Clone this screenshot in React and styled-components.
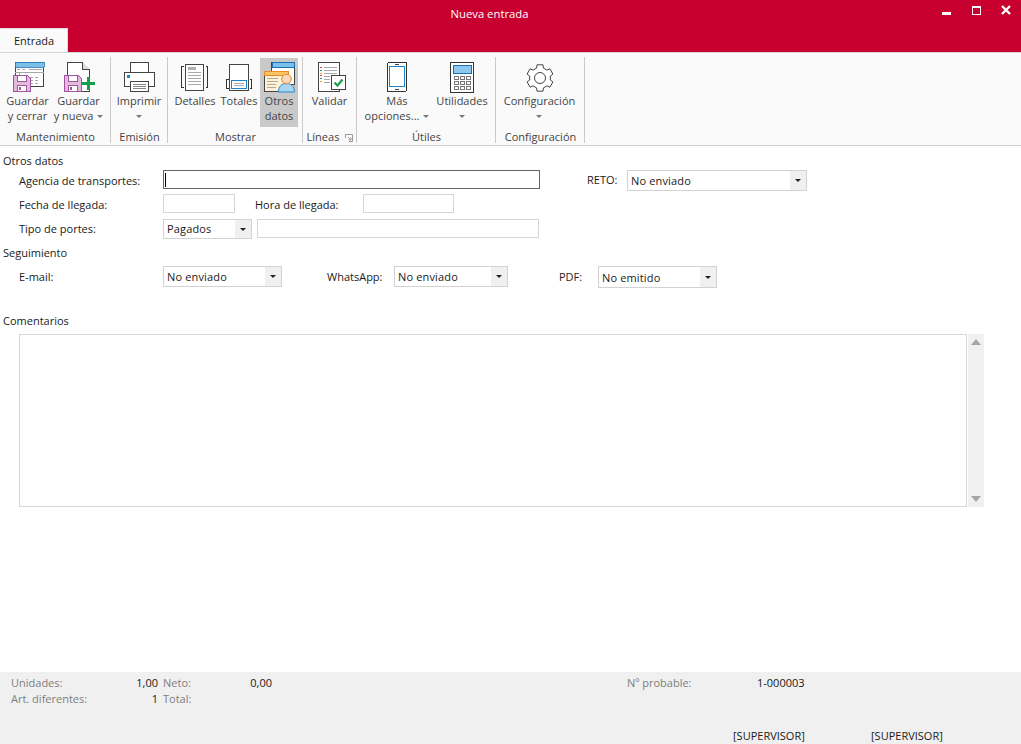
import React from "react";
import styled, { createGlobalStyle } from "styled-components";

const Global = createGlobalStyle`
  html, body { margin: 0; padding: 0; background: #fff; }
  body { font-family: "Open Sans", "Noto Sans", sans-serif; font-size: 11px; color: #1a1a1a; }
`;

const Page = styled.div`
  width: 1021px; height: 744px; display: flex; flex-direction: column; overflow: hidden; background: #fff;
`;
const TitleBar = styled.header`
  height: 28px; background: #c8002f; display: flex; align-items: center; position: relative; flex: none;
`;
const Title = styled.div`
  width: 979px; text-align: center; color: #fff; font-size: 11.3px; line-height: 28px;
`;
const WinControls = styled.div`
  position: absolute; top: 0; left: 0; width: 1021px; height: 28px; pointer-events: none;
`;
const WinIcon = styled.svg`
  position: absolute; left: ${p => p.$x}px; top: ${p => p.$y}px; shape-rendering: ${p => (p.$smooth ? "auto" : "crispEdges")};
`;
const TabRow = styled.div`
  height: 24px; background: #c8002f; flex: none; display: flex; align-items: flex-end;
`;
const Tab = styled.div`
  width: 68px; height: 24px; box-sizing: border-box; background: #fafafa; border: 1px solid #dcdcdc; border-bottom: 0; border-left-color: #fafafa;
  text-align: center; line-height: 23px; font-size: 11px; color: #1a1a1a;
`;
const Ribbon = styled.nav`
  flex: none; display: flex; background: #fafafa; padding-left: 1px;
  border-top: 1px solid #d6d6d6; border-bottom: 1px solid #d0d0d0; height: 92px;
`;
const Group = styled.section`
  width: ${p => p.$w}px; box-sizing: border-box; position: relative; display: flex; flex-direction: column;
  margin-top: 4px; height: 86px;
  border-right: 1px solid #c9c9c9;
  margin-right: 1px;
`;
const Buttons = styled.div`
  display: flex; height: 70px; padding-left: ${p => p.$pad || 0}px;
`;
const RButton = styled.div`
  width: ${p => p.$w}px; height: 69px; flex: none; display: flex; flex-direction: column; align-items: center;
  background: ${p => (p.$active ? "#c9c9c9" : "transparent")};
  margin-top: 1px;
`;
const IconBox = styled.svg`
  width: 36px; height: 36px; flex: none; display: block;
`;
const BtnLabel = styled.div`
  text-align: center; line-height: 15px; color: #444; font-size: 11px; white-space: nowrap; margin-top: -1px;
`;
const Chevron = styled.span`
  display: inline-block; width: 0; height: 0; border-left: 3px solid transparent; border-right: 3px solid transparent;
  border-top: 3px solid #777; vertical-align: middle; margin-left: ${p => p.$ml ?? 4}px; margin-top: -1px;
`;
const GroupLabel = styled.div`
  text-align: center; line-height: 16px; color: #444; font-size: 11px; margin-top: 2px; position: relative;
`;
const LauncherText = styled.span`
  margin-right: 14px;
`;
const Launcher = styled.svg`
  position: absolute; right: 3px; top: 5px;
`;
const Body = styled.main`
  flex: 1; display: flex; flex-direction: column; position: relative;
`;
const Section = styled.div`
  margin: ${p => p.$top}px 0 0 3px; line-height: 16px; font-size: 11px; color: #1a1a1a;
`;
const Row = styled.div`
  display: flex; align-items: flex-start; padding-left: 19px; margin-top: ${p => p.$top || 0}px; height: ${p => p.$h}px;
`;
const Label = styled.label`
  width: ${p => p.$w}px; flex: none; font-size: 11px; line-height: 16px; color: #1a1a1a; margin-top: ${p => p.$mt ?? 3}px; margin-left: ${p => p.$ml || 0}px;
`;
const Input = styled.div`
  width: ${p => p.$w}px; height: 19px; box-sizing: border-box; flex: none; background: #fff;
  border: 1px solid ${p => (p.$focus ? "#646464" : "#d6d6d6")}; margin-left: ${p => p.$ml || 0}px; display: flex; align-items: center; padding-left: 1px;
`;
const Caret = styled.span`
  width: 1px; height: 14px; background: #000; display: block;
`;
const Select = styled.div`
  width: ${p => p.$w}px; height: ${p => p.$h || 21}px; box-sizing: border-box; flex: none; background: #fff; border: 1px solid #d2d2d2;
  display: flex; align-items: stretch; font-size: 11px; color: #1a1a1a; margin-left: ${p => p.$ml || 0}px;
  line-height: ${p => (p.$h || 21) - 2}px;
`;
const SelectText = styled.span`
  flex: 1; padding-left: 3px; padding-top: ${p => p.$dy || 0}px; letter-spacing: .15px;
`;
const SelectBtn = styled.span`
  width: 16px; background: #f0f0f0; display: flex; align-items: center; justify-content: center;
  &::after { content: ""; width: 0; height: 0; border-left: 3px solid transparent; border-right: 3px solid transparent; border-top: 3px solid #222; }
`;
const CommentRow = styled.div`
  display: flex; margin: 5px 0 0 19px; height: 173px;
`;
const Comment = styled.div`
  width: 948px; box-sizing: border-box; border: 1px solid #d6d6d6; background: #fff; flex: none;
`;
const Scroll = styled.div`
  width: 16px; margin-left: 1px; background: #f0f0f0; display: flex; flex-direction: column; justify-content: space-between; align-items: center; padding: 5px 0; box-sizing: border-box;
`;
const ScrollArrow = styled.span`
  width: 0; height: 0; border-left: 5px solid transparent; border-right: 5px solid transparent;
  ${p => (p.$down ? "border-top: 6px solid #a6a6a6;" : "border-bottom: 6px solid #a6a6a6;")}
`;
const Footer = styled.footer`
  height: 72px; flex: none; background: #f0f0f0; display: flex; flex-direction: column; padding: 3px 0 0 11px; box-sizing: border-box; font-size: 11px;
`;
const FootRow = styled.div`
  display: flex; line-height: 16px; white-space: nowrap; margin-top: ${p => (p.$auto ? "auto" : "0")};
`;
const FootCell = styled.div`
  width: ${p => p.$w}px; margin-left: ${p => p.$ml || 0}px; display: flex; flex: none;
`;
const FootLabel = styled.span`
  color: #7d7d7d; flex: ${p => (p.$w ? "none" : 1)}; width: ${p => (p.$w ? p.$w + "px" : "auto")};
`;
const FootValue = styled.span`
  color: #1a1a1a;
`;

const L = "#444";
const B = "#1b87c9";
const Floppy = ({ x, y }) => (
  <g transform={`translate(${x} ${y})`}>
    <path d="M.5.5H14.5L17 3V16.5H.5Z" fill="#e3bad9" stroke="#a253a0" />
    <path d="M4.5.5H13.5V6.5H4.5Z" fill="#fff" stroke="#a253a0" />
    <path d="M4.5 10.5H13.5V16.5H4.5Z" fill="#fff" stroke="#a253a0" />
    <path d="M6 12h2v3H6z" fill="#a253a0" />
  </g>
);
const Icon = ({ children }) => <IconBox viewBox="0 0 36 36" shapeRendering="crispEdges">{children}</IconBox>;

const IconSaveClose = () => (
  <Icon>
    <path d="M5.5 4.5H33.5V28.5H5.5Z" fill="#fff" stroke={L} />
    <path d="M5 4H34V9H5Z" fill="#7cc0ea" stroke="#1b6fb5" strokeWidth=".8" />
    <path d="M7 11h3v1H7zM12 11h3v1h-3zM19 11h13v1H19zM5 14h29v1H5zM9 15h1v12H9zM20 19h3v1h-3zM25 19h3v1h-3zM20 22h3v1h-3zM25 22h3v1h-3zM20 25h3v1h-3zM25 25h3v1h-3z" fill="#a6a6a6" />
    <Floppy x={3} y={17} />
  </Icon>
);
const IconSaveNew = () => (
  <Icon>
    <path d="M6.5 4.5H21.5L28.5 11.5V33.5H6.5Z" fill="#fff" stroke={L} />
    <path d="M21.5 4.5V11.5H28.5" fill="#ddd" stroke={L} />
    <Floppy x={3} y={17} />
    <path d="M26 19h3v5h5v3h-5v5h-3v-5h-5v-3h5z" fill="#13a04e" />
  </Icon>
);
const IconPrint = () => (
  <Icon>
    <path d="M9.5 4.5H27.5V16H9.5Z" fill="#fff" stroke={L} />
    <path d="M3.5 14.5H33.5V28.5H3.5Z" fill="#fff" stroke={L} />
    <path d="M6 17h3v3H6z" fill={B} />
    <path d="M9.5 23.5H27.5V33.5H9.5Z" fill="#fff" stroke={L} />
    <path d="M12 26h13v1H12zM12 28h13v1H12zM12 30h13v1H12z" fill="#888" />
  </Icon>
);
const IconDetails = () => (
  <Icon>
    <path d="M8.5 6.5H26.5V32.5H8.5Z" fill="#fff" stroke={L} />
    <path d="M11 9h8v3h-8z" fill="#b0b0b0" />
    <path d="M11 14h13v1H11zM11 17h13v1H11zM11 20h13v1H11zM11 23h13v1H11zM11 26h13v1H11z" fill="#aaa" />
    <path d="M6.5 8.5H4.5V29.5H6.5M28.5 8.5H30.5V29.5H28.5" fill="none" stroke="#333" />
  </Icon>
);
const IconTotals = () => (
  <Icon>
    <path d="M8.5 6.5H27.5V32.5H8.5Z" fill="#fff" stroke={L} />
    <path d="M7.5 21.5H5.5V30.5H7.5M28.5 21.5H30.5V30.5H28.5" fill="none" stroke="#333" />
    <path d="M10.5 22.5H25.5V30.5H10.5Z" fill="#fff" stroke={B} />
    <path d="M13 25h10v1H13zM13 27h10v1H13z" fill="#aaa" />
  </Icon>
);
const IconOther = () => (
  <Icon>
    <path d="M10.5 4.5H33.5V26H10.5Z" fill="#fff" stroke={L} />
    <path d="M11 4H33V9H11Z" fill="#7cc0ea" stroke="#1b6fb5" />
    <path d="M3.5 13.5H26.5V33.5H3.5Z" fill="#fdf1d8" stroke={L} />
    <path d="M3 13H27V17H3Z" fill="#fbc465" stroke="#ee8a25" />
    <path d="M6 20h11v1H6zM6 23h11v1H6zM6 26h9v1H6zM6 29h9v1H6z" fill="#b5ab90" />
    <g shapeRendering="geometricPrecision">
      <path d="M17.5 34C17.5 28 21 25.5 25.5 25.5S33.5 28 33.5 34Z" fill="#a9d6f2" stroke="#2c8ac8" />
      <circle cx="25.5" cy="21" r="4.8" fill="#fbd9b8" stroke="#e4852f" />
    </g>
  </Icon>
);
const IconValidate = () => (
  <Icon>
    <path d="M6.5 4.5H27.5V33.5H6.5Z" fill="#fff" stroke={L} />
    <path d="M8 9h2v1H8zM8 17h2v1H8z" fill="#d83b3b" />
    <path d="M8 12h2v1H8zM8 20h2v1H8z" fill="#1aa14f" />
    <path d="M8 15h2v1H8zM8 23h2v1H8z" fill="#e6a326" />
    <path d="M12 9h13v1H12zM12 12h13v1H12zM12 15h13v1H12zM12 18h6v1h-6zM12 21h6v1h-6zM12 24h6v1h-6z" fill="#aaa" />
    <path d="M19.5 17.5H33.5V31.5H19.5Z" fill="#fff" stroke={L} />
    <path d="M22.5 24.5l3 3 5-6" fill="none" stroke="#1aa14f" strokeWidth="2.2" shapeRendering="geometricPrecision" />
  </Icon>
);
const IconPhone = () => (
  <Icon>
    <rect x="8.5" y="4.5" width="19" height="29" rx="1.5" fill="#fff" stroke="#333" />
    <path d="M10.5 8.5H25.5V28.5H10.5Z" fill="#fff" stroke={B} />
    <path d="M16 6h4v1h-4zM16 31h4v1h-4z" fill="#444" />
  </Icon>
);
const IconCalc = () => (
  <Icon>
    <path d="M6.5 4.5H29.5V34.5H6.5Z" fill="#fff" stroke="#333" />
    <path d="M9.5 7.5H27.5V15.5H9.5Z" fill="#8cc8ee" stroke="#1b6fb5" />
    {[18, 23, 28].map(y => [10, 16, 22].map(x => (
      <path key={`${x}-${y}`} d={`M${x}.5 ${y}.5h4v3h-4z`} fill="#fff" stroke="#777" />
    )))}
  </Icon>
);
const gearPath = (() => {
  const cx = 18, cy = 20, pts = [];
  for (let i = 0; i < 6; i++) {
    const a = (i * 60 - 90) * Math.PI / 180;
    const p = (r, d) => { const t = a + d * Math.PI / 180; return `${(cx + r * Math.cos(t)).toFixed(1)} ${(cy + r * Math.sin(t)).toFixed(1)}`; };
    pts.push(`${i ? "L" : "M"}${p(13.5, -13)} L${p(13.5, 13)} L${p(10.5, 19)} L${p(10.5, 41)}`);
  }
  return pts.join(" ") + " Z";
})();
const IconGear = () => (
  <IconBox viewBox="0 0 36 36">
    <path d={gearPath} fill="#fff" stroke={L} strokeLinejoin="round" />
    <circle cx="18" cy="20" r="5.5" fill="#fff" stroke={L} />
  </IconBox>
);

const RBtn = ({ w, icon, active, children }) => (
  <RButton $w={w} $active={active}>{icon}<BtnLabel>{children}</BtnLabel></RButton>
);

export default function App() {
  return (
    <Page>
      <Global />
      <TitleBar>
        <Title>Nueva entrada</Title>
        <WinControls>
          <WinIcon $x={942} $y={12} width="9" height="3"><path d="M0 0h9v3H0z" fill="#fff" /></WinIcon>
          <WinIcon $x={972} $y={6} width="9" height="9"><path d="M.5 .5h8v8h-8z" fill="none" stroke="#fff" /><path d="M0 0h9v2H0z" fill="#fff" /></WinIcon>
          <WinIcon $x={1001} $y={5} $smooth width="10" height="10"><path d="M1 1l8 8M9 1l-8 8" stroke="#fff" strokeWidth="2.4" /></WinIcon>
        </WinControls>
      </TitleBar>
      <TabRow><Tab>Entrada</Tab></TabRow>
      <Ribbon>
        <Group $w={110}>
          <Buttons $pad={1}>
            <RBtn w={51} icon={<IconSaveClose />}>Guardar<br />y cerrar</RBtn>
            <RBtn w={51} icon={<IconSaveNew />}>Guardar<br />y nueva<Chevron /></RBtn>
          </Buttons>
          <GroupLabel>Mantenimiento</GroupLabel>
        </Group>
        <Group $w={56}>
          <Buttons>
            <RBtn w={54} icon={<IconPrint />}>Imprimir<br /><Chevron $ml={0} /></RBtn>
          </Buttons>
          <GroupLabel>Emisión</GroupLabel>
        </Group>
        <Group $w={134}>
          <Buttons $pad={3}>
            <RBtn w={46} icon={<IconDetails />}>Detalles</RBtn>
            <RBtn w={42} icon={<IconTotals />}>Totales</RBtn>
            <RBtn w={38} active icon={<IconOther />}>Otros<br />datos</RBtn>
          </Buttons>
          <GroupLabel>Mostrar</GroupLabel>
        </Group>
        <Group $w={53}>
          <Buttons>
            <RBtn w={51} icon={<IconValidate />}>Validar</RBtn>
          </Buttons>
          <GroupLabel>
            <LauncherText>Líneas</LauncherText>
            <Launcher width="8" height="8" viewBox="0 0 8 8"><path d="M.5 4V.5H7.5V7.5H4M3 3l3 3M6 3.5V6H3.5" fill="none" stroke="#999" /></Launcher>
          </GroupLabel>
        </Group>
        <Group $w={138}>
          <Buttons $pad={4}>
            <RBtn w={70} icon={<IconPhone />}>Más<br />opciones...<Chevron /></RBtn>
            <RBtn w={60} icon={<IconCalc />}>Utilidades<br /><Chevron $ml={0} /></RBtn>
          </Buttons>
          <GroupLabel>Útiles</GroupLabel>
        </Group>
        <Group $w={88}>
          <Buttons>
            <RBtn w={85} icon={<IconGear />}>Configuración<br /><Chevron $ml={0} /></RBtn>
          </Buttons>
          <GroupLabel>Configuración</GroupLabel>
        </Group>
      </Ribbon>
      <Body>
        <Section $top={7}>Otros datos</Section>
        <Row $top={1} $h={24}>
          <Label $w={144}>Agencia de transportes:</Label>
          <Input $w={377} $focus><Caret /></Input>
          <Label $w={40} $ml={47} $mt={2}>RETO:</Label>
          <Select $w={180}><SelectText>No enviado</SelectText><SelectBtn /></Select>
        </Row>
        <Row $h={25}>
          <Label $w={144}>Fecha de llegada:</Label>
          <Input $w={72} />
          <Label $w={108} $ml={20}>Hora de llegada:</Label>
          <Input $w={91} />
        </Row>
        <Row $h={26}>
          <Label $w={144} $mt={2}>Tipo de portes:</Label>
          <Select $w={89} $h={20}><SelectText>Pagados</SelectText><SelectBtn /></Select>
          <Input $w={282} $ml={5} />
        </Row>
        <Section $top={0}>Seguimiento</Section>
        <Row $top={5} $h={44}>
          <Label $w={144}>E-mail:</Label>
          <Select $w={119}><SelectText>No enviado</SelectText><SelectBtn /></Select>
          <Label $w={67} $ml={45}>WhatsApp:</Label>
          <Select $w={114}><SelectText>No enviado</SelectText><SelectBtn /></Select>
          <Label $w={39} $ml={51}>PDF:</Label>
          <Select $w={119} $h={22}><SelectText $dy={1}>No emitido</SelectText><SelectBtn /></Select>
        </Row>
        <Section $top={3}>Comentarios</Section>
        <CommentRow>
          <Comment />
          <Scroll><ScrollArrow /><ScrollArrow $down /></Scroll>
        </CommentRow>
      </Body>
      <Footer>
        <FootRow>
          <FootCell $w={147}><FootLabel>Unidades:</FootLabel><FootValue>1,00</FootValue></FootCell>
          <FootCell $w={109} $ml={5}><FootLabel>Neto:</FootLabel><FootValue>0,00</FootValue></FootCell>
          <FootCell $w={176} $ml={355}><FootLabel $w={130}>Nº probable:</FootLabel><FootValue>1-000003</FootValue></FootCell>
        </FootRow>
        <FootRow>
          <FootCell $w={147}><FootLabel>Art. diferentes:</FootLabel><FootValue>1</FootValue></FootCell>
          <FootCell $w={109} $ml={5}><FootLabel>Total:</FootLabel></FootCell>
        </FootRow>
        <FootRow $auto>
          <FootCell $w={138} $ml={722}><FootValue>[SUPERVISOR]</FootValue></FootCell>
          <FootCell $w={100}><FootValue>[SUPERVISOR]</FootValue></FootCell>
        </FootRow>
      </Footer>
    </Page>
  );
}
